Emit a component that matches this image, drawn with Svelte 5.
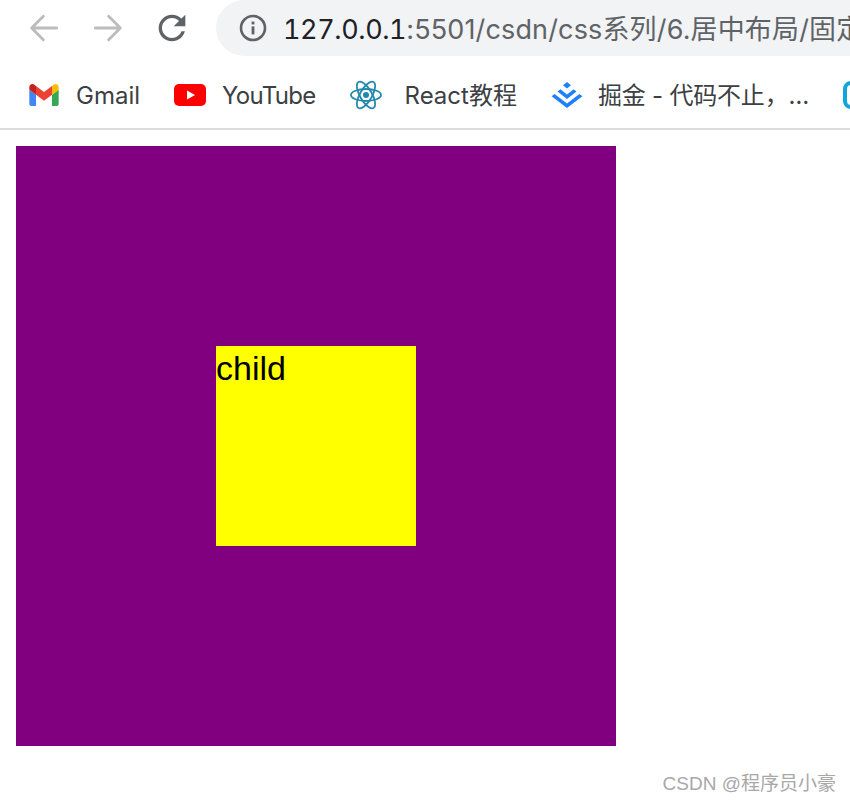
<script>
  const bookmarks = [
    { id: 'gmail', label: 'Gmail' },
    { id: 'youtube', label: 'YouTube' },
    { id: 'react', label: 'React教程' },
    { id: 'juejin', label: '掘金 - 代码不止，…' },
    { id: 'last', label: '' }
  ]
</script>

<main>
  <header class="chrome">
    <div class="toolbar">
      <button class="nav" aria-label="back">
        <svg width="40" height="40" viewBox="0 0 24 24" fill="none" stroke="#bbbcbe" stroke-width="1.7" stroke-linecap="round" stroke-linejoin="round">
          <path d="M19.6 12H5M11.6 5 4.6 12l7 7" />
        </svg>
      </button>
      <button class="nav" aria-label="forward">
        <svg width="40" height="40" viewBox="0 0 24 24" fill="none" stroke="#bbbcbe" stroke-width="1.7" stroke-linecap="round" stroke-linejoin="round">
          <path d="M4.4 12H19M12.4 5l7 7-7 7" />
        </svg>
      </button>
      <button class="nav" aria-label="reload">
        <svg width="40" height="40" viewBox="0 0 24 24" fill="#5f6368">
          <path d="M17.65 6.35C16.2 4.9 14.21 4 12 4c-4.42 0-7.99 3.58-7.99 8s3.57 8 7.99 8c3.73 0 6.84-2.55 7.73-6h-2.08c-.82 2.33-3.04 4-5.65 4-3.31 0-6-2.69-6-6s2.69-6 6-6c1.66 0 3.14.69 4.22 1.78L13 11h7V4l-2.35 2.35z" />
        </svg>
      </button>
      <div class="omnibox">
        <svg class="info" width="28" height="28" viewBox="0 0 28 28" fill="none">
          <circle cx="14" cy="14" r="12" stroke="#5f6368" stroke-width="2.6" />
          <rect x="12.6" y="12.4" width="2.8" height="8" fill="#5f6368" />
          <rect x="12.6" y="7.6" width="2.8" height="2.8" fill="#5f6368" />
        </svg>
        <span class="url"><b>127.0.0.1</b>:5501/csdn/css系列/6.居中布局/固定</span>
      </div>
    </div>

    <nav class="bookmarks">
      {#each bookmarks as b}
        <div class="bm {b.id}">
          {#if b.id === 'gmail'}
            <svg width="30" height="22" viewBox="52 42 88 66">
              <path fill="#4285f4" d="M58 108h14V74L52 59v43c0 3.32 2.69 6 6 6" />
              <path fill="#34a853" d="M120 108h14c3.32 0 6-2.69 6-6V59l-20 15" />
              <path fill="#fbbc04" d="M120 48v26l20-15v-8c0-7.42-8.47-11.65-14.4-7.2" />
              <path fill="#ea4335" d="M72 74V48l24 18 24-18v26L96 92" />
              <path fill="#c5221f" d="M52 51v8l20 15V48l-5.6-4.2c-5.94-4.45-14.4-.22-14.4 7.2" />
            </svg>
          {:else if b.id === 'youtube'}
            <svg width="32" height="22" viewBox="0 0 32 22">
              <rect width="32" height="22" rx="5" fill="#ff0000" />
              <path d="M13 6.5v9l8-4.5z" fill="#fff" />
            </svg>
          {:else if b.id === 'react'}
            <svg width="32" height="32" viewBox="0 0 32 32" fill="none" stroke="#2389ab" stroke-width="1.8">
              <ellipse cx="16" cy="16" rx="15" ry="6" />
              <ellipse cx="16" cy="16" rx="15" ry="6" transform="rotate(60 16 16)" />
              <ellipse cx="16" cy="16" rx="15" ry="6" transform="rotate(120 16 16)" />
              <circle cx="16" cy="16" r="3" fill="#2389ab" stroke="none" />
            </svg>
          {:else if b.id === 'juejin'}
            <svg width="32" height="26" viewBox="0 0 32 26" fill="#1e80ff">
              <path d="M16 0l4 3.2-4 3.2-4-3.2z" />
              <path d="M16 12.4l6.6-5.2 2.9 2.3L16 17 6.5 9.5l2.9-2.3z" />
              <path d="M16 21.6 28.4 11.9 31.4 14.2 16 26 .6 14.2l3-2.3z" />
            </svg>
          {:else}
            <svg width="32" height="28" viewBox="0 0 32 28" fill="none">
              <rect x="2" y="2" width="28" height="24" rx="6" stroke="#10a5dc" stroke-width="4" />
            </svg>
          {/if}
          {#if b.label}<span>{b.label}</span>{/if}
        </div>
      {/each}
    </nav>
  </header>

  <section class="page">
    <div class="parent">
      <div class="child">child</div>
    </div>
  </section>

  <footer class="mark">CSDN @程序员小豪</footer>
</main>

<style>
  :global(body) {
    margin: 0;
    background: #fff;
  }
  main {
    width: 850px;
    height: 802px;
    overflow: hidden;
    font-family: "Inter", "Noto Sans CJK SC", sans-serif;
  }
  .chrome {
    height: 128px;
    border-bottom: 2px solid #dddddd;
  }
  .toolbar {
    display: flex;
    align-items: center;
    height: 56px;
    padding-left: 24px;
  }
  .nav {
    width: 40px;
    height: 40px;
    padding: 0;
    margin-right: 24px;
    border: 0;
    background: none;
  }
  .nav svg {
    display: block;
  }
  .omnibox {
    display: flex;
    align-items: center;
    flex: 1;
    min-width: 0;
    height: 56px;
    padding-left: 23px;
    border-radius: 28px 0 0 28px;
    background: #f1f3f4;
    overflow: hidden;
  }
  .info {
    flex: none;
    margin-right: 16px;
  }
  .url {
    padding-top: 4px;
    font-size: 27px;
    line-height: 32px;
    letter-spacing: .15px;
    color: #5f6368;
    white-space: nowrap;
  }
  .url b {
    font-weight: 400;
    font-variant-numeric: tabular-nums;
    letter-spacing: -.4px;
    color: #202124;
  }
  .bookmarks {
    display: flex;
    align-items: center;
    gap: 34px;
    height: 66px;
    padding-left: 29px;
    margin-top: 6px;
    overflow: hidden;
  }
  .bm {
    display: flex;
    flex: none;
    align-items: center;
    gap: 16px;
    font-size: 24px;
    line-height: 30px;
    color: #3c4043;
    white-space: nowrap;
  }
  .bm span {
    padding-top: 2px;
  }
  .bm svg {
    display: block;
    flex: none;
  }
  .gmail {
    gap: 17px;
  }
  .youtube {
    letter-spacing: -.7px;
  }
  .react {
    gap: 23px;
  }
  .juejin {
    gap: 15px;
    letter-spacing: -.2px;
  }
  .page {
    padding: 16px;
  }
  .parent {
    display: flex;
    align-items: center;
    justify-content: center;
    width: 600px;
    height: 600px;
    background: purple;
  }
  .child {
    width: 200px;
    height: 200px;
    background: yellow;
    color: #000;
    font-family: "Liberation Sans", sans-serif;
    font-size: 34px;
    line-height: 44px;
  }
  .mark {
    padding: 6px 14px 0 0;
    text-align: right;
    font-size: 19px;
    color: #a8a8a8;
    font-family: "Liberation Sans", "Noto Sans CJK SC", sans-serif;
  }
</style>
